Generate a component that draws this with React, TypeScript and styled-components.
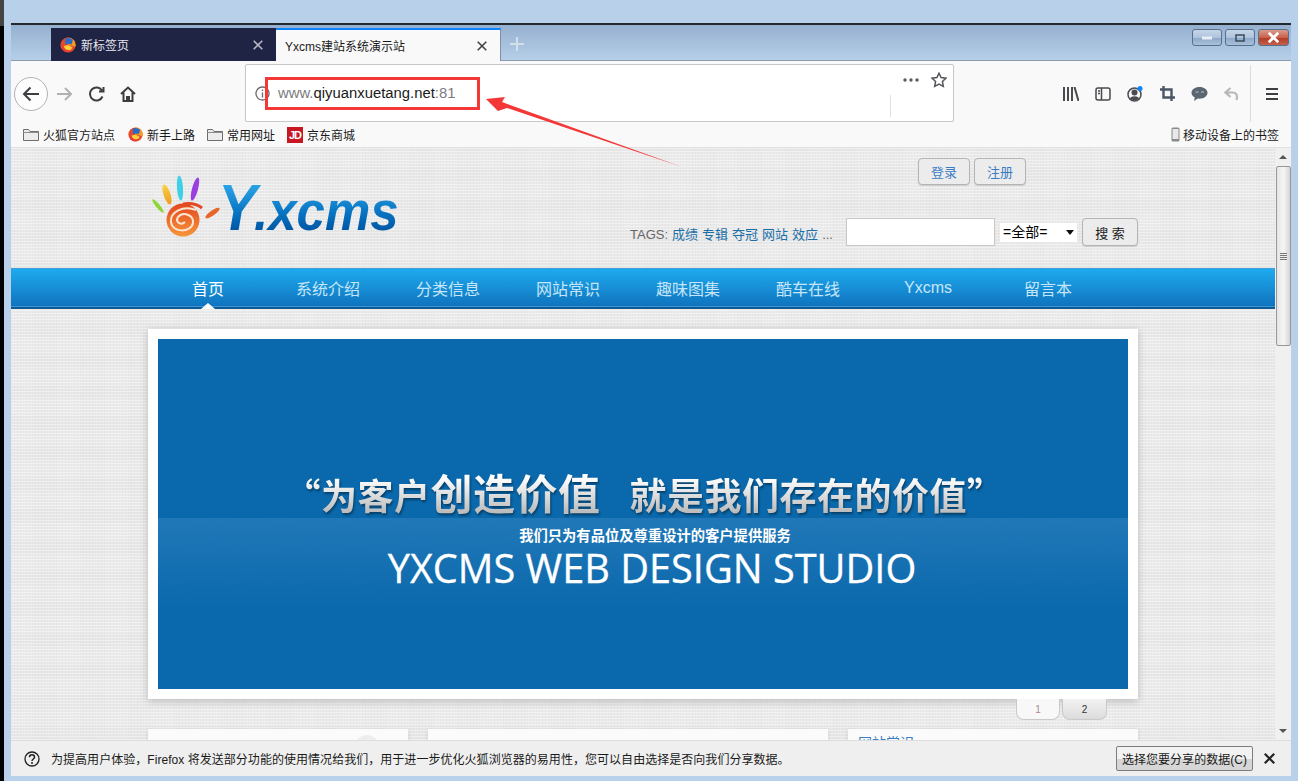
import React from "react";
import styled, { createGlobalStyle } from "styled-components";

const GlobalStyle = createGlobalStyle`
  html, body {
    margin: 0;
    padding: 0;
    background: #b9d0ea;
    overflow: hidden;
  }
  body, input, select, button {
    font-family: "Liberation Sans", "Noto Sans CJK SC", sans-serif;
  }
`;

const Desktop = styled.div`
  display: flex;
  width: 1298px;
  height: 781px;
  overflow: hidden;
`;

const BlackEdge = styled.div`
  width: 4px;
  background: linear-gradient(to bottom, #444 0 26px, #000 26px);
`;

const WindowColumn = styled.div`
  margin-left: 7px;
  width: 1280px;
  display: flex;
  flex-direction: column;
  padding-top: 23px;
`;

const TitleBar = styled.div`
  height: 35px;
  border-top: 2px solid #23272e;
  background: linear-gradient(to bottom, #95b0cf, #b6cfe9);
  border-bottom: 1px solid #8c9bad;
  display: flex;
  align-items: flex-end;
  padding-left: 40px;
  position: relative;
`;

const Tab = styled.div<{ $active?: boolean }>`
  width: 225px;
  height: 33px;
  box-sizing: border-box;
  display: flex;
  align-items: center;
  gap: 5px;
  padding: 0 13px 0 9px;
  font-size: 12px;
  color: ${(p) => (p.$active ? "#1a1a1a" : "#e8e8ee")};
  background: ${(p) => (p.$active ? "#f9f9f9" : "#1f2344")};
  border-top: ${(p) => (p.$active ? "2px solid #0a84ff" : "none")};
  border-right: ${(p) => (p.$active ? "1px solid #7f8fa5" : "none")};
  margin-bottom: -1px;
`;

const TabLabel = styled.span`
  flex: 1;
`;

const PlusButton = styled.div`
  width: 32px;
  height: 32px;
  display: flex;
  align-items: center;
  justify-content: center;
`;

const WindowButtons = styled.div`
  position: absolute;
  top: 4px;
  right: 2px;
  display: flex;
  gap: 3px;
`;

const WinButton = styled.div<{ $close?: boolean }>`
  width: ${(p) => (p.$close ? "31px" : "30px")};
  height: 17px;
  box-sizing: border-box;
  border: 1px solid #59708d;
  border-radius: 3px;
  display: flex;
  align-items: center;
  justify-content: center;
  background: ${(p) =>
    p.$close
      ? "linear-gradient(to bottom, #d99b8c 0, #c9604a 50%, #b23c27 55%, #c4604a 100%)"
      : "linear-gradient(to bottom, #c5d5e8 0, #aec3dc 50%, #8ea9c9 55%, #a9c0da 100%)"};
`;

const Toolbar = styled.div`
  height: 61px;
  background: #f9f9f9;
  display: flex;
  align-items: stretch;
  box-sizing: border-box;
  padding-top: 4px;
`;

const NavGroup = styled.div`
  width: 234px;
  height: 57px;
  box-sizing: border-box;
  padding-left: 3px;
  display: flex;
  align-items: center;
`;

const BackCircle = styled.div`
  width: 34px;
  height: 34px;
  box-sizing: border-box;
  border: 1px solid #b3b3b3;
  border-radius: 50%;
  background: #fdfdfd;
  display: flex;
  align-items: center;
  justify-content: center;
`;

const NavIcon = styled.div<{ $w: number }>`
  width: ${(p) => p.$w}px;
  display: flex;
  justify-content: center;
`;

const UrlBar = styled.div`
  width: 709px;
  height: 58px;
  margin-top: -1px;
  box-sizing: border-box;
  background: #fff;
  border: 1px solid #c8c8c8;
  border-radius: 2px;
  box-shadow: 0 1px 1px rgba(0, 0, 0, 0.08);
  display: flex;
  align-items: stretch;
`;

const UrlMain = styled.div`
  flex: 1;
  display: flex;
  align-items: center;
  padding-left: 9px;
  gap: 8px;
  font-size: 14.85px;
  color: #7b7b80;
`;

const UrlHost = styled.span`
  color: #1a1a1a;
`;

const UrlEnd = styled.div`
  width: 63px;
  display: flex;
  flex-direction: column;
`;

const UrlEndTop = styled.div`
  height: 30px;
  display: flex;
  align-items: center;
  padding-left: 13px;
  gap: 12px;
`;

const UrlEndDivider = styled.div`
  height: 22px;
  border-left: 1px solid #e2e2e2;
`;

const ToolIcons = styled.div`
  flex: 1;
  height: 57px;
  display: flex;
  align-items: center;
  padding-left: 101px;
`;

const ToolIcon = styled.div<{ $w?: number }>`
  width: ${(p) => p.$w ?? 32}px;
  display: flex;
  justify-content: center;
`;

const ToolDivider = styled.div`
  width: 1px;
  height: 58px;
  background: #dcdcdc;
  margin: 0 6px 0 3px;
`;

const BookmarkBar = styled.div`
  height: 26px;
  background: #f9f9f9;
  border-bottom: 1px solid #e0e0e0;
  box-sizing: border-box;
  display: flex;
  align-items: center;
  padding: 0 12px 0 12px;
  font-size: 12px;
  color: #1a1a1a;
`;

const Bookmark = styled.div<{ $w: number }>`
  width: ${(p) => p.$w}px;
  display: flex;
  align-items: center;
  gap: 4px;
  white-space: nowrap;
`;

const BookmarkRight = styled.div`
  margin-left: auto;
  display: flex;
  align-items: center;
  gap: 3px;
  white-space: nowrap;
`;

const JdBadge = styled.span`
  width: 16px;
  height: 16px;
  background: #c81623;
  color: #fff;
  font-size: 11px;
  font-weight: bold;
  display: flex;
  align-items: center;
  justify-content: center;
  letter-spacing: -1px;
`;

const Viewport = styled.div`
  height: 592px;
  display: flex;
  overflow: hidden;
`;

const PageArea = styled.div`
  width: 1264px;
  background-color: #e9e9e9;
  background-image:
    repeating-linear-gradient(0deg, rgba(255, 255, 255, 0.4) 0 1px, transparent 1px 3px),
    repeating-linear-gradient(90deg, rgba(0, 0, 0, 0.018) 0 1px, transparent 1px 3px),
    repeating-linear-gradient(0deg, rgba(0, 0, 0, 0.01) 0 14px, transparent 14px 31px),
    repeating-linear-gradient(90deg, rgba(255, 255, 255, 0.07) 0 22px, transparent 22px 47px);
`;

const Container = styled.div`
  width: 990px;
  margin: 0 auto;
`;

const Header = styled(Container)`
  height: 120px;
  display: flex;
  justify-content: space-between;
`;

const Logo = styled.div`
  display: flex;
  align-items: flex-start;
  padding: 27px 0 0 4px;
`;

const LogoText = styled.div`
  margin: 1px 0 0 -2px;
  height: 64px;
  width: 200px;
  font-style: italic;
  font-weight: bold;
  font-size: 56px;
  line-height: 64px;
  white-space: nowrap;
  transform: scaleX(0.91);
  transform-origin: left;
  color: transparent;
  background: linear-gradient(to bottom, #2aa3e6 15%, #0a76c4 55%, #005aa8 82%);
  background-clip: text;
  -webkit-background-clip: text;
`;

const LogoBig = styled.span`
  font-size: 64px;
  letter-spacing: -3px;
`;

const HeaderRight = styled.div`
  width: 508px;
  display: flex;
  flex-direction: column;
`;

const AuthRow = styled.div`
  display: flex;
  justify-content: flex-end;
  gap: 4px;
  padding: 10px 112px 0 0;
`;

const RoundButton = styled.div<{ $w: number; $h: number; $dark?: boolean }>`
  width: ${(p) => p.$w}px;
  height: ${(p) => p.$h}px;
  box-sizing: border-box;
  border: 1px solid #b4b4b4;
  border-radius: 4px;
  background: #ececec;
  box-shadow: 0 1px 1px rgba(0, 0, 0, 0.12);
  display: flex;
  align-items: center;
  justify-content: center;
  font-size: 13px;
  color: ${(p) => (p.$dark ? "#222" : "#3b7cc4")};
`;

const SearchRow = styled.div`
  display: flex;
  align-items: center;
  margin-top: 33px;
  height: 28px;
  font-size: 13px;
  color: #666;
`;

const Tags = styled.div`
  width: 216px;
  display: flex;
  align-items: baseline;
  gap: 4px;
  white-space: nowrap;
  padding-top: 2px;
`;

const TagLink = styled.a`
  color: #1b6fa8;
  text-decoration: none;
`;

const SearchInput = styled.input`
  width: 149px;
  height: 28px;
  box-sizing: border-box;
  border: 1px solid #c8c8c8;
  background: #fff;
  padding: 0;
  outline: none;
`;

const SelectWrap = styled.div`
  width: 79px;
  height: 21px;
  margin: 0 4px;
  position: relative;
  &::after {
    content: "";
    position: absolute;
    right: 4px;
    top: 8px;
    border-left: 4px solid transparent;
    border-right: 4px solid transparent;
    border-top: 5px solid #111;
    pointer-events: none;
  }
`;

const KindSelect = styled.select`
  width: 100%;
  height: 100%;
  appearance: none;
  border: 1px solid #eaeaea;
  border-radius: 0;
  background: #fff;
  font-size: 14px;
  color: #000;
  padding: 0 0 0 3px;
`;

const NavBar = styled.div`
  height: 41px;
  box-sizing: border-box;
  background: linear-gradient(to bottom, #1eaaee, #0f72bd);
  border-top: 1px solid #3f9fd6;
  border-bottom: 2px solid #0c5b94;
  box-shadow: inset 0 -1px 0 #3b94d2;
`;

const NavList = styled(Container)`
  display: flex;
  height: 38px;
`;

const NavItem = styled.div<{ $active?: boolean }>`
  width: 120px;
  position: relative;
  display: flex;
  align-items: center;
  justify-content: center;
  font-size: 16px;
  color: ${(p) => (p.$active ? "#fff" : "#c6e6f8")};
  &::after {
    content: "";
    display: ${(p) => (p.$active ? "block" : "none")};
    position: absolute;
    bottom: -2px;
    left: 53px;
    border-left: 7px solid transparent;
    border-right: 7px solid transparent;
    border-bottom: 6px solid #fff;
  }
`;

const HeroCard = styled(Container)`
  margin-top: 20px;
  height: 370px;
  box-sizing: border-box;
  padding: 10px;
  background: #fff;
  box-shadow: 0 2px 8px rgba(0, 0, 0, 0.2);
`;

const HeroInner = styled.div`
  height: 350px;
  box-sizing: border-box;
  padding-top: 125px;
  background:
    repeating-linear-gradient(45deg, rgba(0, 0, 0, 0.012) 0 2px, transparent 2px 5px),
    linear-gradient(to bottom, #0a69ad 0 179px, #2178b8 179px, #0a69ad 270px);
  display: flex;
  flex-direction: column;
  align-items: center;
`;

const Headline = styled.div`
  height: 56px;
  margin-left: 3px;
  display: flex;
  align-items: baseline;
  white-space: nowrap;
  font-family: "Noto Sans CJK SC", sans-serif;
  font-weight: bold;
  font-size: 36px;
  letter-spacing: 0.5px;
  line-height: 56px;
  color: transparent;
  background: linear-gradient(to bottom, #ffffff 25%, #bdbdbd 85%);
  background-clip: text;
  -webkit-background-clip: text;
  filter: drop-shadow(1px 2px 1px rgba(0, 0, 0, 0.4));
`;

const HeadlineBig = styled.span`
  font-size: 42px;
  margin-right: 29px;
`;

const HeadlineEnd = styled.span`
  font-size: 37px;
`;

const HeroSub = styled.div`
  margin: 5px 0 0 24px;
  font-family: "Noto Sans CJK SC", sans-serif;
  font-weight: bold;
  font-size: 14.3px;
  line-height: 20px;
  color: #fff;
`;

const HeroTitle = styled.div`
  margin: 3px 0 0 18px;
  font-family: "Open Sans", sans-serif;
  font-size: 39.7px;
  line-height: 40px;
  color: #fff;
  white-space: nowrap;
  -webkit-text-stroke: 0.3px #fff;
`;

const Pager = styled(Container)`
  height: 21px;
  display: flex;
  justify-content: flex-end;
  gap: 2px;
  padding-right: 31px;
  box-sizing: border-box;
`;

const PagerTab = styled.div<{ $first?: boolean }>`
  width: ${(p) => (p.$first ? "44px" : "45px")};
  height: 21px;
  box-sizing: border-box;
  border: 1px solid #c9c9c9;
  border-top: none;
  border-radius: 0 0 8px 8px;
  background: ${(p) =>
    p.$first ? "#f8f8f8" : "linear-gradient(to bottom, #f2f2f2, #dcdcdc)"};
  display: flex;
  align-items: center;
  justify-content: center;
  font-size: 10px;
  color: ${(p) => (p.$first ? "#a88" : "#333")};
`;

const Cards = styled(Container)`
  margin-top: 9px;
  display: grid;
  grid-template-columns: 260px 400px 290px;
  gap: 20px;
`;

const Card = styled.div`
  height: 60px;
  background: #fbfbfb;
  box-shadow: 0 1px 4px rgba(0, 0, 0, 0.12);
  position: relative;
  overflow: hidden;
`;

const CardBump = styled.div`
  position: absolute;
  top: 6px;
  right: 29px;
  width: 24px;
  height: 24px;
  border-radius: 50%;
  background: #ededed;
`;

const CardHeading = styled.div`
  padding: 6px 0 0 10px;
  font-size: 14px;
  line-height: 16px;
  color: #3b7cc4;
`;

const ScrollTrack = styled.div`
  width: 16px;
  background: #f0f0f0;
  display: flex;
  flex-direction: column;
  align-items: center;
`;

const ScrollArrow = styled.div<{ $down?: boolean }>`
  height: 18px;
  width: 100%;
  display: flex;
  align-items: center;
  justify-content: center;
  &::before {
    content: "";
    border-left: 4px solid transparent;
    border-right: 4px solid transparent;
    ${(p) =>
      p.$down ? "border-top: 4px solid #555;" : "border-bottom: 4px solid #555;"}
  }
`;

const ScrollThumb = styled.div`
  width: 15px;
  height: 180px;
  box-sizing: border-box;
  border: 1px solid #979797;
  border-radius: 2px;
  background: linear-gradient(to right, #e4e4e4, #f6f6f6 50%, #d4d4d4);
  display: flex;
  align-items: center;
  justify-content: center;
`;

const ThumbGrip = styled.div`
  width: 7px;
  height: 7px;
  background: repeating-linear-gradient(to bottom, #777 0 1px, #eee 1px 2px);
`;

const ScrollSpace = styled.div`
  flex: 1;
`;

const Notice = styled.div`
  height: 36px;
  box-sizing: border-box;
  background: #efefef;
  border-top: 1px solid #dedede;
  display: flex;
  align-items: center;
  padding: 0 6px 0 13px;
  font-size: 12px;
  letter-spacing: 0.04px;
  color: #1a1a1a;
  gap: 11px;
`;

const NoticeText = styled.span`
  flex: 1;
  white-space: nowrap;
`;

const NoticeButton = styled.div`
  width: 137px;
  height: 25px;
  box-sizing: border-box;
  border: 1px solid #7d7d7d;
  border-radius: 2px;
  background: linear-gradient(to bottom, #f2f2f2 50%, #d6d6d6 50%);
  display: flex;
  align-items: center;
  justify-content: center;
  font-size: 12px;
  white-space: nowrap;
`;

const NoticeClose = styled.div`
  width: 32px;
  margin-left: -11px;
  display: flex;
  justify-content: center;
`;

const UrlHighlight = styled.div`
  position: absolute;
  left: 265px;
  top: 77px;
  width: 215px;
  height: 33px;
  box-sizing: border-box;
  border: 3px solid #f43838;
`;

const ArrowOverlay = styled.svg`
  position: absolute;
  left: 480px;
  top: 90px;
`;

const FirefoxIcon = ({ size = 16 }: { size?: number }) => (
  <svg width={size} height={size} viewBox="0 0 16 16">
    <circle cx="8" cy="8" r="7.6" fill="#e8472c" />
    <path d="M8 .4a7.6 7.6 0 0 1 7.4 9.4L9 8 5 5z" fill="#f79a1e" />
    <path d="M4 9a4.5 4.5 0 0 0 8.6 1.4L8 8z" fill="#ffcf3a" />
    <path d="M5.5 1.500a7 7 0 0 1 7.400 1.500L11.600 7.500 8 6.800 6 8 5 5.500z" fill="#2b6bc8" />
    <path d="M1.500 11a7.600 7.600 0 0 0 5 4.400C4 13.500 2.800 12 1.500 11z" fill="#b5217d" />
  </svg>
);

const CloseX = ({ size = 10, color = "#555", width = 1.6 }: { size?: number; color?: string; width?: number }) => (
  <svg width={size} height={size} viewBox="0 0 10 10">
    <path d="M.7.7l8.6 8.6M9.3.7L.7 9.3" stroke={color} strokeWidth={width} fill="none" />
  </svg>
);

const FolderIcon = () => (
  <svg width="16" height="14" viewBox="0 0 16 14">
    <path d="M.5 12.5v-11h5l1.5 2h8.500v9z" fill="#ececec" stroke="#6e6e6e" />
    <path d="M.5 4.500h15" stroke="#8d8d8d" />
  </svg>
);

const Stroke = ({ w, h, d, color = "#4a4a4f", sw = 2 }: { w: number; h: number; d: string; color?: string; sw?: number }) => (
  <svg width={w} height={h} viewBox={`0 0 ${w} ${h}`}>
    <path d={d} fill="none" stroke={color} strokeWidth={sw} />
  </svg>
);

const HandLogo = () => (
  <svg width="68" height="64" viewBox="0 0 68 64">
    <defs>
      <linearGradient id="swirl" x1="0" y1="0" x2="0" y2="1">
        <stop offset="0" stopColor="#e2481f" />
        <stop offset="1" stopColor="#f7953a" />
      </linearGradient>
      <linearGradient id="finger" x1="0" y1="0" x2="0" y2="1">
        <stop offset="0" stopColor="#f7d44a" />
        <stop offset="1" stopColor="#f09a1c" />
      </linearGradient>
    </defs>
    <ellipse cx="6" cy="31" rx="2" ry="8.500" transform="rotate(-40 6 31)" fill="#8fd43a" />
    <ellipse cx="15" cy="19.500" rx="3.500" ry="10.500" transform="rotate(-18 15 19.500)" fill="url(#finger)" />
    <ellipse cx="28" cy="13" rx="3" ry="12.500" transform="rotate(-4 28 13)" fill="#3fd0e8" />
    <ellipse cx="43" cy="14" rx="3" ry="12" transform="rotate(15 43 14)" fill="#9a3fe0" />
    <ellipse cx="60.500" cy="38" rx="2.500" ry="8.500" transform="rotate(55 60.500 38)" fill="#e8652c" />
    <circle cx="31" cy="45" r="16.500" fill="url(#swirl)" />
    <path d="M50 33c-5-4-12-5-19-4" fill="none" stroke="#e2481f" strokeWidth="3" />
    <path d="M44 35c-13-5-26 2-25 12 1 11 20 11 22 1 1-8-10-12-15-6-3 5 3 9 7 5" fill="none" stroke="#fce6d2" strokeWidth="2" />
  </svg>
);

const navItems = ["首页", "系统介绍", "分类信息", "网站常识", "趣味图集", "酷车在线", "Yxcms", "留言本"];
const tagItems = ["成绩", "专辑", "夺冠", "网站", "效应"];

export default function App() {
  return (
    <Desktop>
      <GlobalStyle />
      <BlackEdge />
      <WindowColumn>
        <TitleBar>
          <Tab>
            <FirefoxIcon />
            <TabLabel>新标签页</TabLabel>
            <CloseX size={10} color="#b8b8c4" />
          </Tab>
          <Tab $active>
            <TabLabel>Yxcms建站系统演示站</TabLabel>
            <CloseX size={10} color="#444" />
          </Tab>
          <PlusButton>
            <Stroke w={14} h={14} d="M7 0v14M0 7h14" color="#d4dfec" />
          </PlusButton>
          <WindowButtons>
            <WinButton>
              <Stroke w={10} h={4} d="M0 2h10" color="#e8eef5" sw={3} />
            </WinButton>
            <WinButton>
              <Stroke w={10} h={8} d="M1 1h8v6H1z" color="#3e4a5a" sw={1.5} />
            </WinButton>
            <WinButton $close>
              <CloseX size={11} color="#fff" width={2.5} />
            </WinButton>
          </WindowButtons>
        </TitleBar>

        <Toolbar>
          <NavGroup>
            <BackCircle>
              <Stroke w={18} h={16} d="M17 8H2M8.500 1.500L2 8l6.500 6.500" color="#3e3e42" />
            </BackCircle>
            <NavIcon $w={34}>
              <Stroke w={16} h={14} d="M0 7h14M8 1l6 6-6 6" color="#b1b1b3" />
            </NavIcon>
            <NavIcon $w={30}>
              <Stroke w={16} h={16} d="M13.500 10.500A6.500 6.500 0 1 1 13 4.500M14.500 1v4.500H10" color="#3e3e42" />
            </NavIcon>
            <NavIcon $w={32}>
              <Stroke w={16} h={16} d="M1 8l7-6.500L15 8M3.500 6.500V15h3.500v-4h2v4h3.500V6.500" color="#3e3e42" />
            </NavIcon>
          </NavGroup>

          <UrlBar>
            <UrlMain>
              <Stroke w={15} h={15} d="M7.500 1a6.500 6.500 0 1 0 .01 0M7.500 6.500V11.500M7.500 3.500V5" color="#6a6a6f" sw={1.3} />
              <span>
                www.<UrlHost>qiyuanxuetang.net</UrlHost>:81
              </span>
            </UrlMain>
            <UrlEnd>
              <UrlEndTop>
                <svg width="16" height="4" viewBox="0 0 16 4">
                  <circle cx="2" cy="2" r="1.700" fill="#5b5b5f" />
                  <circle cx="8" cy="2" r="1.700" fill="#5b5b5f" />
                  <circle cx="14" cy="2" r="1.700" fill="#5b5b5f" />
                </svg>
                <svg width="16" height="16" viewBox="0 0 16 16">
                  <path d="M8 1.200l2.100 4.400 4.800.6-3.500 3.300.9 4.800L8 12l-4.300 2.300.9-4.800L1.100 6.200l4.800-.6z" fill="none" stroke="#55555a" strokeWidth="1.500" />
                </svg>
              </UrlEndTop>
              <UrlEndDivider />
            </UrlEnd>
          </UrlBar>

          <ToolIcons>
            <ToolIcon>
              <Stroke w={16} h={14} d="M1 0v14M5 0v14M9 0v14M11.500 0l4 14" />
            </ToolIcon>
            <ToolIcon>
              <svg width="16" height="14" viewBox="0 0 16 14">
                <rect x="1" y="1" width="14" height="12" rx="2" fill="none" stroke="#4a4a4f" strokeWidth="1.500" />
                <path d="M6.500 1v12M3 4h2M3 6.500h2" stroke="#4a4a4f" strokeWidth="1.500" />
              </svg>
            </ToolIcon>
            <ToolIcon>
              <svg width="16" height="16" viewBox="0 0 16 16">
                <circle cx="7.500" cy="8.500" r="6.500" fill="none" stroke="#4a4a4f" strokeWidth="1.500" />
                <circle cx="7.500" cy="6.500" r="3" fill="#4a4a4f" />
                <path d="M3 12.500c1-3 8-3 9 0-2 2-7 2-9 0z" fill="#4a4a4f" />
                <circle cx="13" cy="2.500" r="2.500" fill="#0a84ff" />
              </svg>
            </ToolIcon>
            <ToolIcon>
              <Stroke w={15} h={15} d="M3.500 0v11.500H15M0 3.500h11.500V15" color="#4a5565" sw={2.4} />
            </ToolIcon>
            <ToolIcon>
              <svg width="17" height="14" viewBox="0 0 17 14">
                <path d="M8.500 0C4 0 .5 2.500.5 5.800c0 2 1.300 3.700 3.300 4.800L3 14l3.800-2.400c.6.100 1.100.1 1.700.1 4.500 0 8-2.600 8-5.900S13 0 8.500 0z" fill="#5a6672" />
                <path d="M4.500 5h3M10 5h3" stroke="#9aa4ae" strokeWidth="1.500" />
              </svg>
            </ToolIcon>
            <ToolIcon>
              <Stroke w={15} h={14} d="M6.500 1L1.500 5.500l5 4.500M2 5.500h6.500c3.500 0 5.500 2.500 4 7.500" color="#b8b8ba" sw={2.2} />
            </ToolIcon>
            <ToolDivider />
            <ToolIcon $w={30}>
              <Stroke w={12} h={12} d="M0 1h12M0 6h12M0 11h12" color="#3e3e42" />
            </ToolIcon>
          </ToolIcons>
        </Toolbar>

        <BookmarkBar>
          <Bookmark $w={105}>
            <FolderIcon />
            火狐官方站点
          </Bookmark>
          <Bookmark $w={79}>
            <FirefoxIcon size={15} />
            新手上路
          </Bookmark>
          <Bookmark $w={80}>
            <FolderIcon />
            常用网址
          </Bookmark>
          <Bookmark $w={80}>
            <JdBadge>JD</JdBadge>
            京东商城
          </Bookmark>
          <BookmarkRight>
            <svg width="9" height="15" viewBox="0 0 9 15">
              <rect x="0.500" y="0.500" width="8" height="14" rx="1.500" fill="#8a8a8a" />
              <rect x="1.500" y="2" width="6" height="10" fill="#e8e8e8" />
            </svg>
            移动设备上的书签
          </BookmarkRight>
        </BookmarkBar>

        <Viewport>
          <PageArea>
            <Header>
              <Logo>
                <HandLogo />
                <LogoText>
                  <LogoBig>Y</LogoBig>.xcms
                </LogoText>
              </Logo>
              <HeaderRight>
                <AuthRow>
                  <RoundButton $w={52} $h={27}>登录</RoundButton>
                  <RoundButton $w={52} $h={27}>注册</RoundButton>
                </AuthRow>
                <SearchRow>
                  <Tags>
                    <span>TAGS:</span>
                    {tagItems.map((t) => (
                      <TagLink key={t}>{t}</TagLink>
                    ))}
                    <span>...</span>
                  </Tags>
                  <SearchInput />
                  <SelectWrap>
                    <KindSelect defaultValue="all">
                      <option value="all">=全部=</option>
                    </KindSelect>
                  </SelectWrap>
                  <RoundButton $w={56} $h={28} $dark>搜 索</RoundButton>
                </SearchRow>
              </HeaderRight>
            </Header>

            <NavBar>
              <NavList>
                {navItems.map((item, index) => (
                  <NavItem key={item} $active={index === 0}>
                    {item}
                  </NavItem>
                ))}
              </NavList>
            </NavBar>

            <HeroCard>
              <HeroInner>
                <Headline>
                  “为客户<HeadlineBig>创造价值</HeadlineBig>
                  <HeadlineEnd>就是我们存在的价值”</HeadlineEnd>
                </Headline>
                <HeroSub>我们只为有品位及尊重设计的客户提供服务</HeroSub>
                <HeroTitle>YXCMS WEB DESIGN STUDIO</HeroTitle>
              </HeroInner>
            </HeroCard>

            <Pager>
              <PagerTab $first>1</PagerTab>
              <PagerTab>2</PagerTab>
            </Pager>

            <Cards>
              <Card>
                <CardBump />
              </Card>
              <Card />
              <Card>
                <CardHeading>网站常识</CardHeading>
              </Card>
            </Cards>
          </PageArea>

          <ScrollTrack>
            <ScrollArrow />
            <ScrollThumb>
              <ThumbGrip />
            </ScrollThumb>
            <ScrollSpace />
            <ScrollArrow $down />
          </ScrollTrack>
        </Viewport>

        <Notice>
          <svg width="16" height="16" viewBox="0 0 16 16">
            <circle cx="8" cy="8" r="7" fill="none" stroke="#222" strokeWidth="1.300" />
            <path d="M5.500 6.200c0-3.200 5-3.200 5 0 0 1.800-2.500 1.800-2.500 3.800" fill="none" stroke="#222" strokeWidth="1.500" />
            <circle cx="8" cy="12" r="1" fill="#222" />
          </svg>
          <NoticeText>
            为提高用户体验，Firefox 将发送部分功能的使用情况给我们，用于进一步优化火狐浏览器的易用性，您可以自由选择是否向我们分享数据。
          </NoticeText>
          <NoticeButton>选择您要分享的数据(C)</NoticeButton>
          <NoticeClose>
            <CloseX size={11} color="#222" width={2} />
          </NoticeClose>
        </Notice>
      </WindowColumn>

      <UrlHighlight />
      <ArrowOverlay width="210" height="85" viewBox="0 0 210 85">
        <path d="M6 9L25 7 22 12 202 77 27 18 18 21z" fill="#f43838" />
      </ArrowOverlay>
    </Desktop>
  );
}
